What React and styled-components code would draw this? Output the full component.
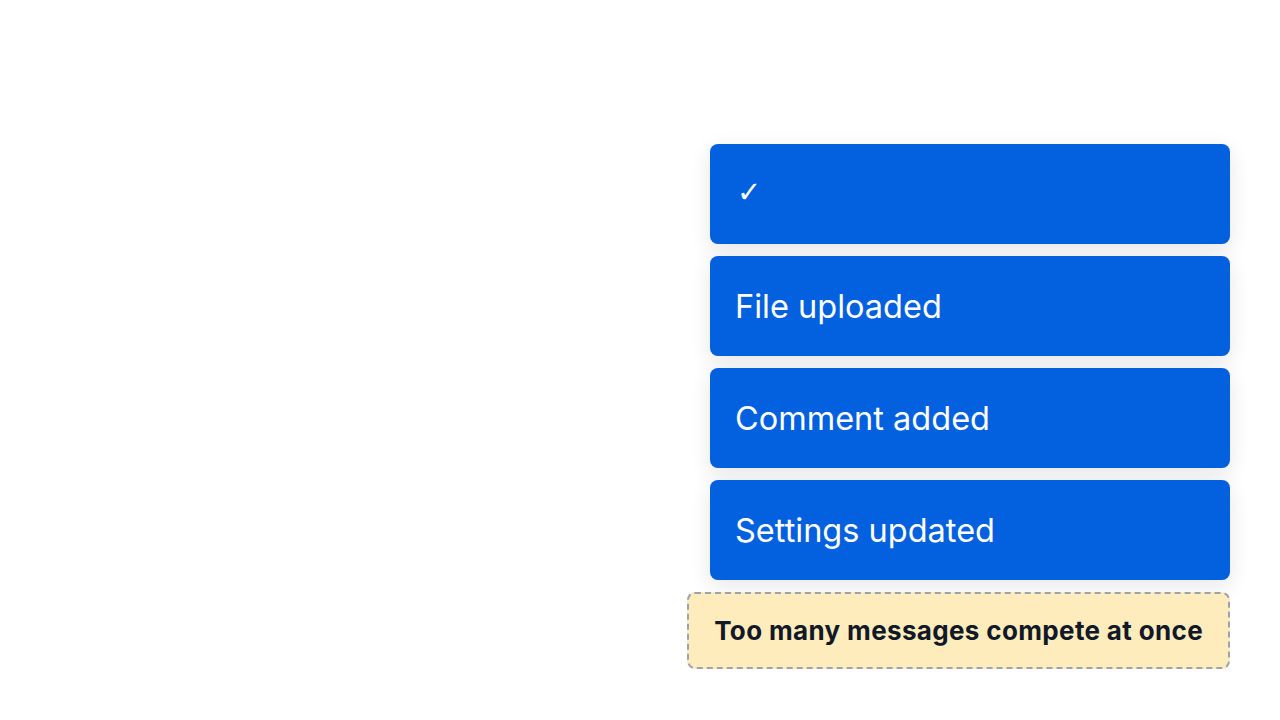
import styled, { createGlobalStyle } from 'styled-components';

const GlobalStyle = createGlobalStyle`
  html, body {
    margin: 0;
    padding: 0;
    background: #ffffff;
    font-family: Inter, "Noto Sans", "Liberation Sans", sans-serif;
  }
`;

const Page = styled.div`
  height: 720px;
  display: flex;
  justify-content: flex-end;
  align-items: flex-end;
  padding: 0 50px 51px 0;
  box-sizing: border-box;
`;

const Stack = styled.div`
  display: flex;
  flex-direction: column;
  align-items: flex-end;
  gap: 12px;
`;

const Toast = styled.div`
  width: 520px;
  height: 100px;
  box-sizing: border-box;
  padding: 0 25px;
  display: flex;
  align-items: center;
  background: #0360df;
  color: #ffffff;
  border-radius: 8px;
  font-size: 32.5px;
  font-weight: 400;
  box-shadow: 0 6px 22px rgba(15, 23, 42, 0.1);
`;

const Check = styled.span`
  font-family: "DejaVu Sans", sans-serif;
  font-size: 29px;
  margin-left: 2px;
  padding-bottom: 5px;
`;

const Warning = styled.div`
  box-sizing: border-box;
  height: 77px;
  padding: 0 25px;
  display: flex;
  align-items: center;
  background: #feecbc;
  border: 2px dashed #9ca3af;
  border-radius: 8px;
  color: #111827;
  font-size: 26px;
  font-weight: 700;
  letter-spacing: 0.35px;
`;

const messages = ['File uploaded', 'Comment added', 'Settings updated'];

export default function App() {
  return (
    <>
      <GlobalStyle />
      <Page>
        <Stack>
          <Toast>
            <Check>✓</Check>
          </Toast>
          {messages.map(text => (
            <Toast key={text}>{text}</Toast>
          ))}
          <Warning>Too many messages compete at once</Warning>
        </Stack>
      </Page>
    </>
  );
}
